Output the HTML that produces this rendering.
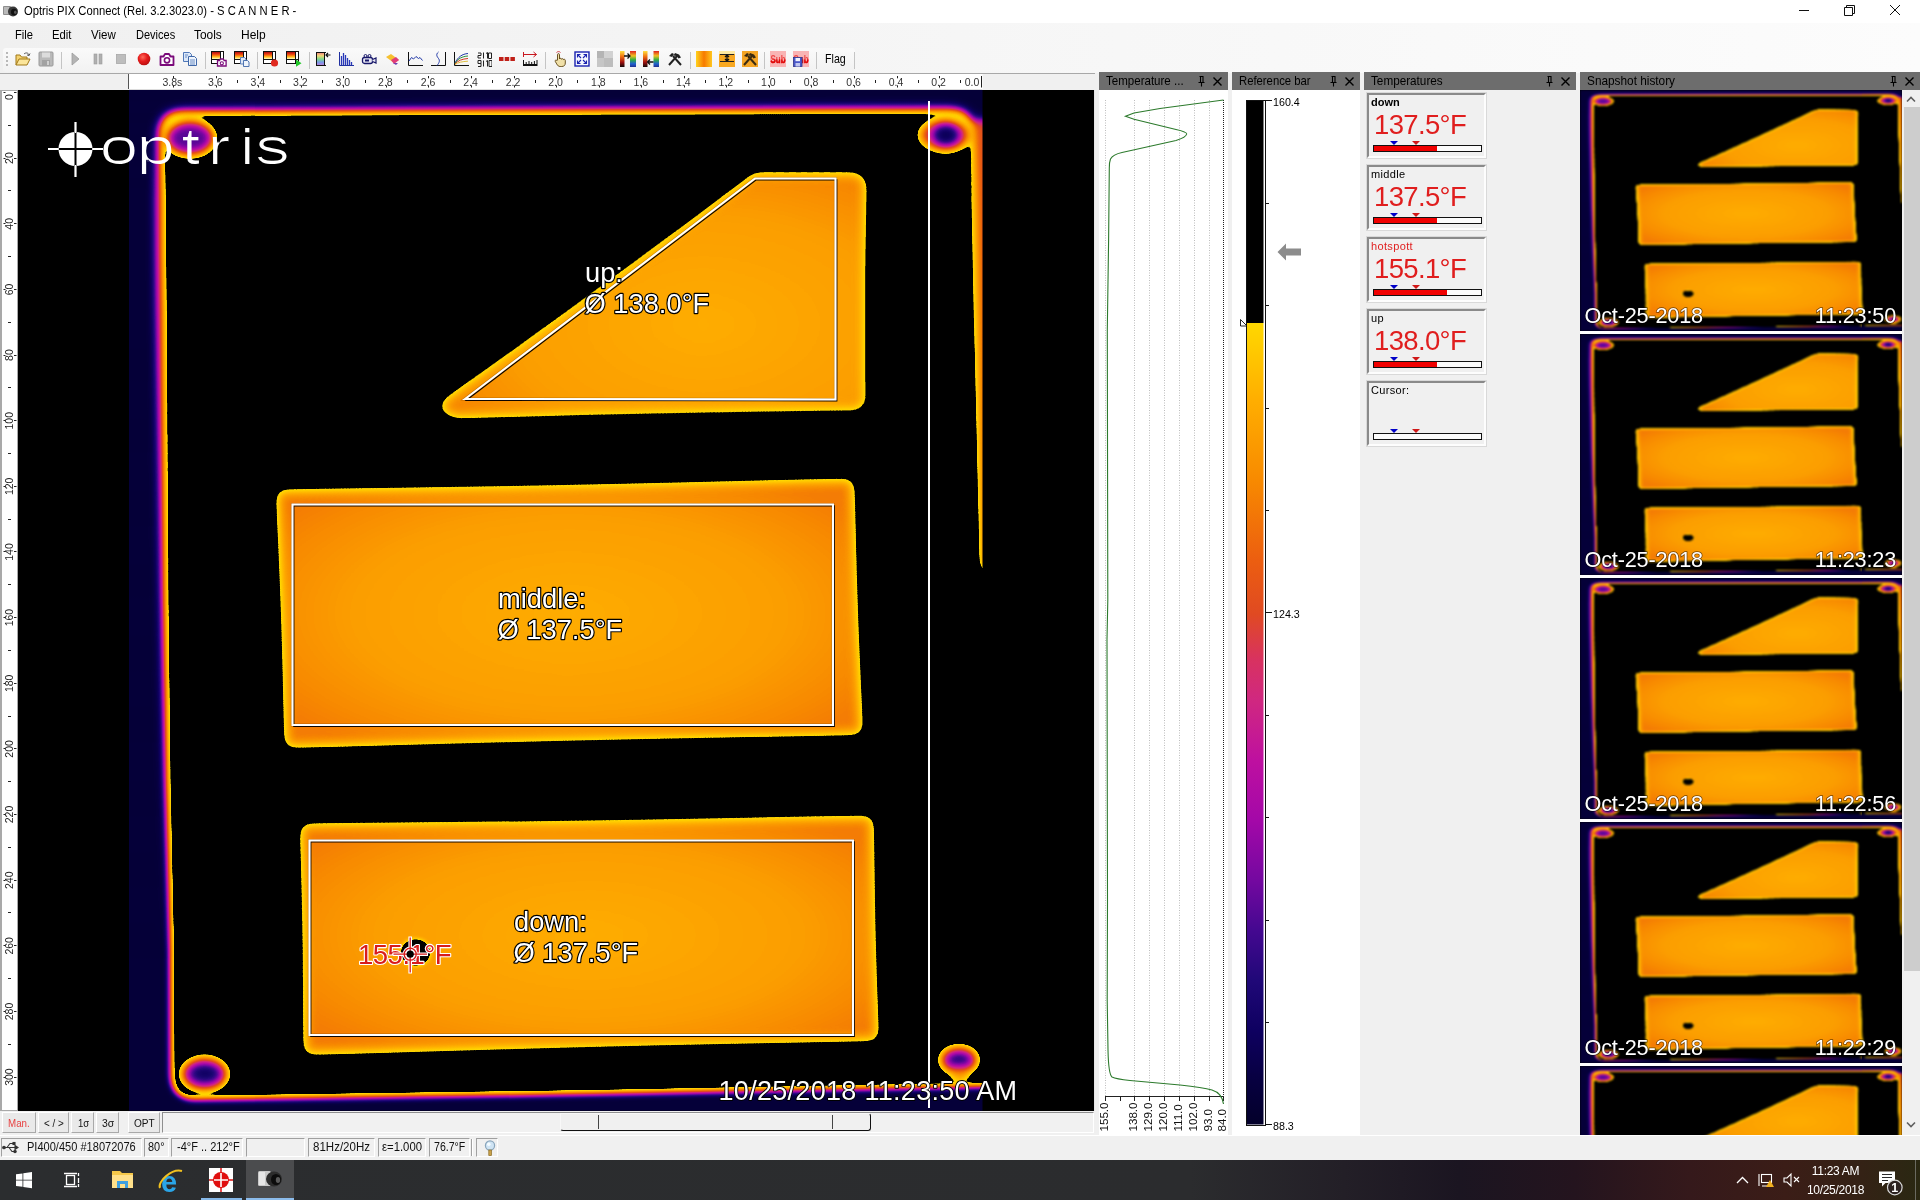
<!DOCTYPE html>
<html lang="en"><head><meta charset="utf-8"><title>Optris PIX Connect</title>
<style>
*{box-sizing:border-box}
html,body{margin:0;padding:0}
body{width:1920px;height:1200px;position:relative;overflow:hidden;background:#f0f0f0;font-family:"Liberation Sans",sans-serif;font-size:12px;color:#000}
.abs{position:absolute}
.t{position:absolute;white-space:nowrap;line-height:1}
#title{left:0;top:0;width:1920px;height:23px;background:#fff}
#menu{left:0;top:23px;width:1920px;height:24px;background:linear-gradient(90deg,#f0f0f0,#fcfcfc)}
#menu .t{top:6px;font-size:12.5px}
#tool{left:0;top:47px;width:1920px;height:26px;background:linear-gradient(90deg,#f0f0f0,#fcfcfc)}
#toolin{left:3px;top:1px;width:852px;height:24px;background:linear-gradient(#fafafa,#f2f2f2);border-radius:3px}
.sep{position:absolute;top:5px;width:1px;height:17px;background:#c4c4c4}
.ico{position:absolute;top:4px;width:16px;height:16px}
.phead{position:absolute;top:72px;height:18px;background:#6d6d6d;color:#000;font-size:12.5px}
.phead .t{left:7px;top:3px}
.pbody{position:absolute;top:90px;background:#fff}
.tbox{position:absolute;left:1367px;width:119px;height:65px;border:2px solid;border-color:#8a8a8a #fdfdfd #fdfdfd #8a8a8a;background:#f0f0f0;box-shadow:0 0 0 1px #d9d9d9}
.tbox .lab{position:absolute;left:2px;top:1px;font-size:11px;line-height:13px;white-space:nowrap}
.tbox .val{position:absolute;left:5px;top:16px;font-size:27.5px;line-height:28px;color:#e01e1e;white-space:nowrap;letter-spacing:-0.65px}
.tbox .bar{position:absolute;left:4px;top:50px;width:109px;height:7px;border:1px solid #111;background:#fbfbfb}
.tbox .bar i{position:absolute;left:0;top:0;height:5px;background:#f00000}
.tri{position:absolute;top:46px;width:0;height:0;border-left:4px solid transparent;border-right:4px solid transparent;border-top:4px solid #0000c8}
.sb{position:absolute;top:1138px;height:19px;border:1px solid;border-color:#a0a0a0 #fff #fff #a0a0a0;font-size:12px;line-height:17px;padding-left:3px;white-space:nowrap;overflow:hidden}
.tab{position:absolute;top:1112px;height:21px;border:1px solid;border-color:#fff #a9a9a9 #a9a9a9 #fff;background:#e9e9e9;font-size:11.5px;line-height:19px;text-align:center;white-space:nowrap}
</style></head>
<body>
<div id="w" style="position:absolute;left:0;top:0;width:1920px;height:1200px;will-change:transform">
<div id="title" class="abs"><svg class="abs" style="left:3px;top:4px" width="16" height="15" viewBox="0 0 16 15"><rect x="0" y="2" width="8" height="9" rx="1" fill="#8e8e8e"/><rect x="1" y="3" width="5" height="7" fill="#b9b9b9"/><ellipse cx="10" cy="7.5" rx="5" ry="5" fill="#3a3a3a"/><ellipse cx="11" cy="8" rx="3" ry="3.2" fill="#111"/><ellipse cx="12.3" cy="8.3" rx="1.3" ry="1.8" fill="#555"/></svg><div class="t" style="left:24.0px;top:5.2px;font-size:12.6px;color:#000;transform:scaleX(0.8925);transform-origin:0 0;">Optris PIX Connect (Rel. 3.2.3023.0) - S C A N N E R -</div><svg class="abs" style="left:1790px;top:0" width="130" height="23" viewBox="1790 0 130 23" fill="none" stroke="#111" stroke-width="1"><path d="M1799 10.5h10"/><path d="M1844.5 7.5h8v8h-8z"/><path d="M1846.5 7.5v-2h8v8h-2"/><path d="M1890 5l10 10M1900 5l-10 10"/></svg></div>
<div id="menu" class="abs"><div class="t" style="left:15.2px;top:5.5px;font-size:12.8px;color:#000;transform:scaleX(0.8727);transform-origin:0 0;">File</div><div class="t" style="left:52.4px;top:5.5px;font-size:12.8px;color:#000;transform:scaleX(0.8841);transform-origin:0 0;">Edit</div><div class="t" style="left:91.2px;top:5.5px;font-size:12.8px;color:#000;transform:scaleX(0.9014);transform-origin:0 0;">View</div><div class="t" style="left:135.8px;top:5.5px;font-size:12.8px;color:#000;transform:scaleX(0.8610);transform-origin:0 0;">Devices</div><div class="t" style="left:194.1px;top:5.5px;font-size:12.8px;color:#000;transform:scaleX(0.9303);transform-origin:0 0;">Tools</div><div class="t" style="left:241.3px;top:5.5px;font-size:12.8px;color:#000;transform:scaleX(0.9382);transform-origin:0 0;">Help</div></div>
<div id="tool" class="abs"><div id="toolin" class="abs"></div><svg width="0" height="0" style="position:absolute"><defs><linearGradient id="gp" x1="0" y1="0" x2="0" y2="1"><stop offset="0" stop-color="#b01010"/><stop offset=".3" stop-color="#e83a10"/><stop offset=".6" stop-color="#ff9a10"/><stop offset=".85" stop-color="#ffe45a"/><stop offset="1" stop-color="#fffbe0"/></linearGradient><linearGradient id="gr" x1="0" y1="0" x2="1" y2="0"><stop offset="0" stop-color="#e02020"/><stop offset=".3" stop-color="#f0d020"/><stop offset=".55" stop-color="#30c040"/><stop offset=".8" stop-color="#3060e0"/><stop offset="1" stop-color="#a030c0"/></linearGradient></defs></svg><svg class="abs" style="left:5px;top:4px" width="4" height="18" viewBox="0 0 4 18"><rect x="1" y="1" width="2" height="2" fill="#b8b8b8"/><rect x="1" y="5" width="2" height="2" fill="#b8b8b8"/><rect x="1" y="9" width="2" height="2" fill="#b8b8b8"/><rect x="1" y="13" width="2" height="2" fill="#b8b8b8"/></svg><svg class="ico" style="left:15px" viewBox="0 0 16 16"><path d="M1 14V4h4l1.5 2H12v2" fill="#f4d270" stroke="#a07818" stroke-width="1"/><path d="M1 14l3-6h11l-3 6z" fill="#fbe59a" stroke="#a07818" stroke-width="1"/><path d="M9 3c2-2 5-1 5 1.5M14 4.5l1-2M14 4.5l-2-.6" fill="none" stroke="#555" stroke-width="1"/></svg><svg class="ico" style="left:38px" viewBox="0 0 16 16"><rect x="1" y="1" width="14" height="14" rx="1" fill="#b9b9b9" stroke="#9a9a9a"/><rect x="4" y="1.5" width="8" height="5" fill="#dcdcdc"/><rect x="4" y="9" width="8" height="6" fill="#a2a2a2"/><rect x="9" y="10" width="2" height="4" fill="#d0d0d0"/></svg><svg class="ico" style="left:67px" viewBox="0 0 16 16"><path d="M5 2l7 6-7 6z" fill="#b4b4b4" stroke="#9c9c9c" stroke-width=".8"/></svg><svg class="ico" style="left:90px" viewBox="0 0 16 16"><rect x="4" y="3" width="3" height="10" fill="#b0b0b0" stroke="#9a9a9a" stroke-width=".6"/><rect x="9" y="3" width="3" height="10" fill="#b0b0b0" stroke="#9a9a9a" stroke-width=".6"/></svg><svg class="ico" style="left:113px" viewBox="0 0 16 16"><rect x="3.5" y="3.5" width="9" height="9" fill="#bdbdbd" stroke="#a8a8a8" stroke-width=".8"/></svg><svg class="ico" style="left:136px" viewBox="0 0 16 16"><radialGradient id="grec" cx=".4" cy=".35" r=".7"><stop offset="0" stop-color="#ff6a5a"/><stop offset=".5" stop-color="#e51c1c"/><stop offset="1" stop-color="#b40e0e"/></radialGradient><circle cx="8" cy="8" r="6.3" fill="url(#grec)"/></svg><svg class="ico" style="left:159px" viewBox="0 0 16 16"><path d="M1.5 5.5h3l1.5-2.5h4l1.5 2.5h3v8.500h-13z" fill="#fff" stroke="#7a0a7a" stroke-width="1.8" stroke-linejoin="round"/><circle cx="8" cy="9.3" r="2.6" fill="#fff" stroke="#7a0a7a" stroke-width="1.6"/></svg><svg class="ico" style="left:182px" viewBox="0 0 16 16"><path d="M1.500 1.500h6l2 2v7h-8z" fill="#dce8f8" stroke="#5078b8"/><path d="M6.500 5.500h6l2 2v7h-8z" fill="#eef4fc" stroke="#4068a8"/><path d="M8 9h5M8 11h5M8 13h5M3 4h3M3 6h2" stroke="#5a82c0" stroke-width=".9"/></svg><svg class="ico" style="left:211px" viewBox="0 0 16 16"><rect x="0.5" y="0.5" width="12" height="12" fill="#fff" stroke="#111"/><rect x="1" y="1" width="8" height="7" fill="url(#gp)"/><path d="M1 8.5h11M9.5 1v11" stroke="#111" stroke-width="1" fill="none"/><path d="M6.500 9.500h2l.8-1.500h3l.8 1.500h2v5.500h-8.600z" fill="#fff" stroke="#7a0a7a" stroke-width="1.300"/><circle cx="10.800" cy="12.300" r="1.600" fill="#fff" stroke="#7a0a7a" stroke-width="1.100"/></svg><svg class="ico" style="left:234px" viewBox="0 0 16 16"><rect x="0.5" y="0.5" width="12" height="12" fill="#fff" stroke="#111"/><rect x="1" y="1" width="8" height="7" fill="url(#gp)"/><path d="M1 8.5h11M9.5 1v11" stroke="#111" stroke-width="1" fill="none"/><path d="M6.500 6.500h4l1.500 1.500v5h-5.500z" fill="#dce8f8" stroke="#5078b8" stroke-width=".9"/><path d="M9.500 9.500h4l1.500 1.500v4.500h-5.500z" fill="#eef4fc" stroke="#4068a8" stroke-width=".9"/></svg><svg class="ico" style="left:263px" viewBox="0 0 16 16"><rect x="0.5" y="0.5" width="12" height="12" fill="#fff" stroke="#111"/><rect x="1" y="1" width="8" height="7" fill="url(#gp)"/><path d="M1 8.5h11M9.5 1v11" stroke="#111" stroke-width="1" fill="none"/><circle cx="11.500" cy="12" r="3.600" fill="#e02a20"/></svg><svg class="ico" style="left:286px" viewBox="0 0 16 16"><rect x="0.5" y="0.5" width="12" height="12" fill="#fff" stroke="#111"/><rect x="1" y="1" width="8" height="7" fill="url(#gp)"/><path d="M1 8.5h11M9.5 1v11" stroke="#111" stroke-width="1" fill="none"/><path d="M10 8.500l5.500 3.700-5.500 3.600z" fill="#22c82a"/></svg><svg class="ico" style="left:315px" viewBox="0 0 16 16"><linearGradient id="grv" x1="0" y1="0" x2="0" y2="1"><stop offset="0" stop-color="#f08080"/><stop offset=".25" stop-color="#f0d878"/><stop offset=".5" stop-color="#80d888"/><stop offset=".75" stop-color="#7898e8"/><stop offset="1" stop-color="#c080d8"/></linearGradient><rect x="2" y="1.500" width="7" height="13" fill="url(#grv)"/><path d="M1 1.500h10M1 14.500h10M1.500 1.500v13M9.500 1.500v13" stroke="#111" fill="none"/><path d="M15.500 4h-4.500M13 2l-2 2 2 2" stroke="#111" stroke-width="1.200" fill="none"/></svg><svg class="ico" style="left:338px" viewBox="0 0 16 16"><path d="M1.500 1v13.500H16" stroke="#2030a0" fill="none"/><path d="M3.500 14V5M5.500 14V2M7.500 14V4M9.500 14V7M11.500 14V9M13.500 14V11" stroke="#2838b8" stroke-width="1.300"/></svg><svg class="ico" style="left:361px" viewBox="0 0 16 16"><rect x="1.500" y="6.500" width="10" height="6" rx="2" fill="#e8e8f4" stroke="#18186a" stroke-width="1.300"/><path d="M11.500 8.500l3.500-1.500v5l-3.500-1.500" fill="#e8e8f4" stroke="#18186a" stroke-width="1.200"/><circle cx="4.500" cy="5" r="1.500" fill="none" stroke="#18186a"/><circle cx="8.500" cy="5" r="1.500" fill="none" stroke="#18186a"/><rect x="4" y="8.500" width="4" height="2" fill="#18186a"/></svg><svg class="ico" style="left:384px" viewBox="0 0 16 16"><path d="M2 6l5-3 8 6-5 3z" fill="#f6c030"/><path d="M7 9l5-3 3 3-5 4z" fill="#e03c7a"/><path d="M9 12l3 2 2-2" fill="#7040b0"/></svg><svg class="ico" style="left:407px" viewBox="0 0 16 16"><path d="M1.500 1v13.500H16" stroke="#111" fill="none"/><path d="M2 10l2.500-3.500 2 1.500 2.500-2.500 2.500 2 1.500-1 2.500 3" stroke="#2038a8" fill="none"/></svg><svg class="ico" style="left:430px" viewBox="0 0 16 16"><path d="M1 14.500h14.500V1" stroke="#111" fill="none"/><path d="M8.500 1c-3 2.500-1.500 4.500 0 6.500s1 4-1.500 7" stroke="#2038a8" fill="none"/></svg><svg class="ico" style="left:453px" viewBox="0 0 16 16"><path d="M1.500 1v13.500H16" stroke="#111" fill="none"/><path d="M2 12c3-6 7-9 13-9.500" stroke="#2038a8" fill="none"/><path d="M2 12.500c3-5 7-7 13-7.500" stroke="#30903a" fill="none"/><path d="M2 13c3-3.500 7-5 13-5.500" stroke="#d03a20" fill="none"/><path d="M2 13.500c3-2 7-3 13-3.300" stroke="#e0c040" fill="none"/></svg><svg class="ico" style="left:476px" viewBox="0 0 16 16"><g fill="none" stroke="#222" stroke-width="1"><path d="M2 2h3v2.500h-3v2.500h3M7.500 1.500v6M10 2.500l1.500-1v6M14 2h-1.500v5.500h3v-5.500zM2 9.500h3v3h-3zM5 12.500v3h-3M7.500 9.500v6M10 10.500l1.500-1v6M13 9.500h3v6h-3z"/></g></svg><svg class="ico" style="left:499px" viewBox="0 0 16 16"><rect x="0" y="6" width="4.500" height="4" fill="#c02018"/><rect x="5.700" y="6" width="4.500" height="4" fill="#c02018"/><rect x="11.400" y="6" width="4.500" height="4" fill="#c02018"/></svg><svg class="ico" style="left:522px" viewBox="0 0 16 16"><path d="M1.500 1v5M1.500 3.500h13M11.500 1l3 2.500-3 2.500" stroke="#c81820" fill="none"/><path d="M1 14h14.500" stroke="#111" stroke-width="2"/><path d="M1.500 13V9M15 13V9M4.200 13v-2M7 13v-3M9.700 13v-2M12.400 13v-3" stroke="#111"/></svg><svg class="ico" style="left:551px" viewBox="0 0 16 16"><path d="M6.500 9V3.600c0-1.300 2-1.300 2 0V8c.4-1 2-.9 2 .2.500-.9 2-.6 2 .4.600-.6 1.800-.3 1.800.8v2.600c0 2.200-1.200 3.500-3.600 3.500h-1.500c-1.600 0-2.500-.8-3.500-2.600l-1.500-2.600c-.5-1 1-1.800 1.800-.6z" fill="#f0e0a8" stroke="#5a4210" stroke-width=".9" stroke-linejoin="round"/><path d="M5.500 1.500c1.200-1.200 3-1.200 4 0" stroke="#d02838" fill="none" stroke-width=".9"/></svg><svg class="ico" style="left:574px" viewBox="0 0 16 16"><rect x="1" y="1" width="14" height="14" fill="#f4f6ff" stroke="#1a22b0" stroke-width="1.400"/><path d="M3.500 6.500v-3h3M9.500 3.500h3v3M12.500 9.500v3h-3M6.500 12.500h-3v-3M4 4l3 3M12 4l-3 3M12 12l-3-3M4 12l3-3" stroke="#1a22b0" fill="none" stroke-width="1.100"/></svg><svg class="ico" style="left:597px" viewBox="0 0 16 16"><rect x="0" y="0" width="16" height="16" fill="#c6c6c6"/><rect x="0" y="0" width="7" height="7" fill="#b4b4b4"/><rect x="7" y="7" width="9" height="9" fill="#bdbdbd"/><rect x="7" y="0" width="9" height="7" fill="#d2d2d2"/></svg><svg class="ico" style="left:620px" viewBox="0 0 16 16"><linearGradient id="gth" x1="0" y1="0" x2="0" y2="1"><stop offset="0" stop-color="#ffe040"/><stop offset=".35" stop-color="#f07010"/><stop offset=".7" stop-color="#a01010"/><stop offset="1" stop-color="#100808"/></linearGradient><linearGradient id="grb" x1="0" y1="0" x2="0" y2="1"><stop offset="0" stop-color="#e02020"/><stop offset=".3" stop-color="#f0c020"/><stop offset=".55" stop-color="#30b040"/><stop offset=".8" stop-color="#2060d0"/><stop offset="1" stop-color="#203090"/></linearGradient><rect x="0" y="0" width="4.500" height="16" fill="url(#gth)"/><rect x="10" y="0" width="6" height="16" fill="url(#grb)"/><path d="M4 5h6M7.500 2.500l2.500 2.500-2.500 2.500" stroke="#111" stroke-width="1.300" fill="none"/></svg><svg class="ico" style="left:643px" viewBox="0 0 16 16"><rect x="0" y="0" width="4.500" height="16" fill="url(#gth)"/><rect x="10.500" y="0" width="5.500" height="16" fill="url(#grb)"/><path d="M10.500 11h-6M7 8.500l-2.500 2.500 2.500 2.500" stroke="#111" stroke-width="1.300" fill="none"/></svg><svg class="ico" style="left:667px" viewBox="0 0 16 16"><path d="M2 14l8-9M14 14l-8-9" stroke="#222" stroke-width="2"/><path d="M8 2l4 1.500 2 3-2.500 1-2-2.500-3-.5z" fill="#222"/><path d="M2 5l3-3 2 1-2 3z" fill="#222"/></svg><svg class="ico" style="left:696px" viewBox="0 0 16 16"><linearGradient id="go" x1="0" y1="0" x2="1" y2="0"><stop offset="0" stop-color="#ffd21e"/><stop offset=".5" stop-color="#f77a00"/><stop offset="1" stop-color="#ffc61e"/></linearGradient><rect x="0" y="0" width="16" height="16" fill="url(#go)"/></svg><svg class="ico" style="left:719px" viewBox="0 0 16 16"><rect x="0" y="0" width="16" height="16" fill="#f8a820"/><rect x="0" y="0" width="16" height="3" fill="#ffe9a0"/><path d="M1 3.500h14M1 10.500h14" stroke="#222"/><path d="M8 4v6M6 6l2-2 2 2M6 8l2 2 2-2" stroke="#111" stroke-width="1.300" fill="none"/></svg><svg class="ico" style="left:742px" viewBox="0 0 16 16"><rect x="0" y="0" width="16" height="16" fill="#f4a424"/><path d="M2 14l8-9M14 14l-8-9" stroke="#3a2a10" stroke-width="2"/><path d="M8 2l4 1.500 2 3-2.500 1-2-2.500-3-.5z" fill="#3a2a10"/><path d="M2 5l3-3 2 1-2 3z" fill="#3a2a10"/></svg><svg class="ico" style="left:770px" viewBox="0 0 16 16"><rect x="0" y="0" width="16" height="16" fill="#f9b4b4"/><clipPath id="sublow"><rect x="0" y="8.500" width="16" height="8"/></clipPath><text x="8" y="12" font-size="10.500" textLength="15" lengthAdjust="spacingAndGlyphs" font-weight="bold" text-anchor="middle" fill="#ee4848" font-family="Liberation Sans,sans-serif">Sub</text><rect x="0" y="8" width="16" height="4.500" fill="#e80c0c" opacity=".0"/><g clip-path="url(#sublow)"><text x="8" y="12" font-size="10.500" textLength="15" lengthAdjust="spacingAndGlyphs" font-weight="bold" text-anchor="middle" fill="#e00808" stroke="#e00808" stroke-width=".4" font-family="Liberation Sans,sans-serif">Sub</text></g></svg><svg class="ico" style="left:793px" viewBox="0 0 16 16"><rect x="0" y="0" width="16" height="16" fill="#f9b4b4"/><text x="8" y="12" font-size="10.500" textLength="15" lengthAdjust="spacingAndGlyphs" font-weight="bold" text-anchor="middle" fill="#ee4848" font-family="Liberation Sans,sans-serif">Sub</text><g clip-path="url(#sublow)"><text x="8" y="12" font-size="10.500" textLength="15" lengthAdjust="spacingAndGlyphs" font-weight="bold" text-anchor="middle" fill="#e00808" stroke="#e00808" stroke-width=".4" font-family="Liberation Sans,sans-serif">Sub</text></g><rect x="0.500" y="6.500" width="8.500" height="9" fill="#4a58c8" stroke="#2c3890" stroke-width=".8"/><rect x="2.500" y="7" width="4.500" height="3.200" fill="#f0f2ff"/><rect x="2.500" y="12" width="4.500" height="3.500" fill="#c0c6f0"/></svg><div class="sep" style="left:61px"></div><div class="sep" style="left:205px"></div><div class="sep" style="left:257px"></div><div class="sep" style="left:309px"></div><div class="sep" style="left:545px"></div><div class="sep" style="left:690px"></div><div class="sep" style="left:764px"></div><div class="sep" style="left:816px"></div><div class="sep" style="left:854px"></div><div class="t" style="left:824.7px;top:5.5px;font-size:12.8px;color:#000;transform:scaleX(0.8353);transform-origin:0 0;">Flag</div></div>
<div class="abs" style="left:0;top:73px;width:1095px;height:17px;background:#f0f0f0;border-top:1px solid #a8a8a8"></div><svg class="abs" style="left:0;top:73px" width="1096" height="17" viewBox="0 73 1096 17" font-family="Liberation Sans,sans-serif" font-size="10.5"><rect x="129" y="74" width="853.500" height="15" fill="#fff"/><path d="M128.500 74v15" stroke="#555"/><path d="M129 89.500h853" stroke="#dcdcdc"/><path d="M173.5 76v11.5M216.5 76v11.5M237.5 80v3M258.5 76v11.5M280.5 80v3M301.5 76v11.5M322.5 80v3M343.5 76v11.5M365.5 80v3M386.5 76v11.5M407.5 80v3M428.5 76v11.5M450.5 80v3M471.5 76v11.5M492.5 80v3M514.5 76v11.5M535.5 80v3M556.5 76v11.5M577.5 80v3M599.5 76v11.5M620.5 80v3M641.5 76v11.5M663.5 80v3M684.5 76v11.5M705.5 80v3M726.5 76v11.5M748.5 80v3M769.5 76v11.5M790.5 80v3M811.5 76v11.5M833.5 80v3M854.5 76v11.5M875.5 80v3M897.5 76v11.5M918.5 80v3M939.5 76v11.5M960.5 80v3M981.5 76v11.5" stroke="#222" stroke-width="1"/><rect x="167.2" y="78.3" width="12" height="7" fill="#fff"/><text x="172.4" y="85.5" text-anchor="middle" fill="#333">3.8s</text><rect x="209.8" y="78.3" width="12" height="7" fill="#fff"/><text x="215.2" y="85.5" text-anchor="middle" fill="#333">3.6</text><rect x="252.3" y="78.3" width="12" height="7" fill="#fff"/><text x="257.8" y="85.5" text-anchor="middle" fill="#333">3.4</text><rect x="294.8" y="78.3" width="12" height="7" fill="#fff"/><text x="300.3" y="85.5" text-anchor="middle" fill="#333">3.2</text><rect x="337.4" y="78.3" width="12" height="7" fill="#fff"/><text x="342.9" y="85.5" text-anchor="middle" fill="#333">3.0</text><rect x="379.9" y="78.3" width="12" height="7" fill="#fff"/><text x="385.4" y="85.5" text-anchor="middle" fill="#333">2.8</text><rect x="422.5" y="78.3" width="12" height="7" fill="#fff"/><text x="428.0" y="85.5" text-anchor="middle" fill="#333">2.6</text><rect x="465.0" y="78.3" width="12" height="7" fill="#fff"/><text x="470.5" y="85.5" text-anchor="middle" fill="#333">2.4</text><rect x="507.6" y="78.3" width="12" height="7" fill="#fff"/><text x="513.1" y="85.5" text-anchor="middle" fill="#333">2.2</text><rect x="550.1" y="78.3" width="12" height="7" fill="#fff"/><text x="555.6" y="85.5" text-anchor="middle" fill="#333">2.0</text><rect x="592.7" y="78.3" width="12" height="7" fill="#fff"/><text x="598.2" y="85.5" text-anchor="middle" fill="#333">1.8</text><rect x="635.2" y="78.3" width="12" height="7" fill="#fff"/><text x="640.8" y="85.5" text-anchor="middle" fill="#333">1.6</text><rect x="677.8" y="78.3" width="12" height="7" fill="#fff"/><text x="683.3" y="85.5" text-anchor="middle" fill="#333">1.4</text><rect x="720.3" y="78.3" width="12" height="7" fill="#fff"/><text x="725.8" y="85.5" text-anchor="middle" fill="#333">1.2</text><rect x="762.9" y="78.3" width="12" height="7" fill="#fff"/><text x="768.4" y="85.5" text-anchor="middle" fill="#333">1.0</text><rect x="805.5" y="78.3" width="12" height="7" fill="#fff"/><text x="811.0" y="85.5" text-anchor="middle" fill="#333">0.8</text><rect x="848.0" y="78.3" width="12" height="7" fill="#fff"/><text x="853.5" y="85.5" text-anchor="middle" fill="#333">0.6</text><rect x="890.5" y="78.3" width="12" height="7" fill="#fff"/><text x="896.0" y="85.5" text-anchor="middle" fill="#333">0.4</text><rect x="933.1" y="78.3" width="12" height="7" fill="#fff"/><text x="938.6" y="85.5" text-anchor="middle" fill="#333">0.2</text><text x="972" y="85.5" text-anchor="middle" fill="#333" stroke="#fff" stroke-width="2.6" paint-order="stroke">0.0</text></svg>
<div class="abs" style="left:0;top:90px;width:18px;height:1021px;background:#a9a9a9"></div><svg class="abs" style="left:0;top:90px" width="18" height="1021" viewBox="0 90 18 1021" font-family="Liberation Sans,sans-serif" font-size="10.5"><rect x="2" y="91" width="15" height="1019" fill="#fff"/><path d="M3.500 92.500h2M14 92.500h2.500" stroke="#222"/><text transform="translate(13.300 97.0) rotate(-90)" text-anchor="middle" fill="#222">0</text><text transform="translate(13.300 158.1) rotate(-90)" text-anchor="middle" fill="#222">20</text><text transform="translate(13.300 223.8) rotate(-90)" text-anchor="middle" fill="#222">40</text><text transform="translate(13.300 289.4) rotate(-90)" text-anchor="middle" fill="#222">60</text><text transform="translate(13.300 355.1) rotate(-90)" text-anchor="middle" fill="#222">80</text><text transform="translate(13.300 420.7) rotate(-90)" text-anchor="middle" fill="#222">100</text><text transform="translate(13.300 486.3) rotate(-90)" text-anchor="middle" fill="#222">120</text><text transform="translate(13.300 552.0) rotate(-90)" text-anchor="middle" fill="#222">140</text><text transform="translate(13.300 617.6) rotate(-90)" text-anchor="middle" fill="#222">160</text><text transform="translate(13.300 683.3) rotate(-90)" text-anchor="middle" fill="#222">180</text><text transform="translate(13.300 748.9) rotate(-90)" text-anchor="middle" fill="#222">200</text><text transform="translate(13.300 814.5) rotate(-90)" text-anchor="middle" fill="#222">220</text><text transform="translate(13.300 880.2) rotate(-90)" text-anchor="middle" fill="#222">240</text><text transform="translate(13.300 945.8) rotate(-90)" text-anchor="middle" fill="#222">260</text><text transform="translate(13.300 1011.5) rotate(-90)" text-anchor="middle" fill="#222">280</text><text transform="translate(13.300 1077.1) rotate(-90)" text-anchor="middle" fill="#222">300</text><path d="M8 125.5h3M3.5 158.5h2M14 158.5h2.5M8 190.5h3M3.5 223.5h2M14 223.5h2.5M8 256.5h3M3.5 289.5h2M14 289.5h2.5M8 322.5h3M3.5 355.5h2M14 355.5h2.5M8 387.5h3M3.5 420.5h2M14 420.5h2.5M8 453.5h3M3.5 486.5h2M14 486.5h2.5M8 519.5h3M3.5 551.5h2M14 551.5h2.5M8 584.5h3M3.5 617.5h2M14 617.5h2.5M8 650.5h3M3.5 683.5h2M14 683.5h2.5M8 716.5h3M3.5 748.5h2M14 748.5h2.5M8 781.5h3M3.5 814.5h2M14 814.5h2.5M8 847.5h3M3.5 880.5h2M14 880.5h2.5M8 912.5h3M3.5 945.5h2M14 945.5h2.5M8 978.5h3M3.5 1011.5h2M14 1011.5h2.5M8 1044.5h3M3.5 1077.5h2M14 1077.5h2.5" stroke="#222" stroke-width="1"/></svg>
<svg class="abs" style="left:18px;top:90px" width="1077" height="1021" viewBox="18 90 1077 1021" font-family="Liberation Sans,sans-serif"><defs><filter id="pal" filterUnits="userSpaceOnUse" x="100" y="60" width="920" height="1080" color-interpolation-filters="sRGB"><feComponentTransfer><feFuncR type="table" tableValues="0.012 0.017 0.022 0.027 0.035 0.043 0.051 0.064 0.084 0.104 0.124 0.163 0.204 0.244 0.291 0.344 0.397 0.451 0.496 0.541 0.586 0.631 0.661 0.685 0.710 0.735 0.755 0.771 0.788 0.804 0.819 0.830 0.842 0.852 0.862 0.872 0.883 0.895 0.908 0.920 0.930 0.939 0.947 0.956 0.964 0.972 0.977 0.982 0.987 0.992 0.997 1.000 1.000 1.000 1.000 1.000 1.000 0.000 0.000 0.000 0.000 0.000 0.000 0.000"/><feFuncG type="table" tableValues="0.000 0.000 0.000 0.000 0.000 0.000 0.000 0.004 0.013 0.022 0.031 0.031 0.031 0.031 0.031 0.031 0.031 0.031 0.031 0.031 0.031 0.031 0.037 0.044 0.052 0.060 0.075 0.098 0.120 0.142 0.161 0.175 0.189 0.211 0.241 0.270 0.297 0.318 0.339 0.360 0.386 0.417 0.448 0.479 0.510 0.540 0.566 0.591 0.616 0.641 0.667 0.694 0.725 0.755 0.786 0.816 0.847 0.000 0.000 0.000 0.000 0.000 0.000 0.000"/><feFuncB type="table" tableValues="0.165 0.193 0.221 0.249 0.284 0.320 0.357 0.388 0.415 0.442 0.468 0.496 0.523 0.550 0.573 0.590 0.608 0.626 0.634 0.642 0.649 0.657 0.653 0.646 0.638 0.631 0.610 0.581 0.551 0.522 0.488 0.443 0.398 0.337 0.261 0.185 0.127 0.108 0.090 0.071 0.056 0.045 0.034 0.023 0.011 0.000 0.000 0.000 0.000 0.000 0.000 0.000 0.000 0.000 0.000 0.000 0.000 0.000 0.000 0.000 0.000 0.000 0.000 0.000"/></feComponentTransfer><feGaussianBlur stdDeviation="0.65"/></filter><filter id="b2" filterUnits="userSpaceOnUse" x="60" y="20" width="1020" height="1160" color-interpolation-filters="sRGB"><feGaussianBlur stdDeviation="2"/></filter><filter id="b3" filterUnits="userSpaceOnUse" x="60" y="20" width="1020" height="1160" color-interpolation-filters="sRGB"><feGaussianBlur stdDeviation="3"/></filter><filter id="b4" filterUnits="userSpaceOnUse" x="60" y="20" width="1020" height="1160" color-interpolation-filters="sRGB"><feGaussianBlur stdDeviation="4"/></filter><filter id="b5" filterUnits="userSpaceOnUse" x="60" y="20" width="1020" height="1160" color-interpolation-filters="sRGB"><feGaussianBlur stdDeviation="5"/></filter><filter id="b55" filterUnits="userSpaceOnUse" x="60" y="20" width="1020" height="1160" color-interpolation-filters="sRGB"><feGaussianBlur stdDeviation="5.5"/></filter><filter id="b6" filterUnits="userSpaceOnUse" x="60" y="20" width="1020" height="1160" color-interpolation-filters="sRGB"><feGaussianBlur stdDeviation="6"/></filter><linearGradient id="mgr" gradientUnits="userSpaceOnUse" x1="0" y1="95" x2="0" y2="960"><stop offset="0" stop-color="#777"/><stop offset=".12" stop-color="#fff"/><stop offset=".25" stop-color="#fff"/><stop offset="1" stop-color="#000"/></linearGradient><mask id="mA" maskUnits="userSpaceOnUse" x="100" y="60" width="920" height="1080"><rect x="100" y="60" width="920" height="1080" fill="url(#mgr)"/></mask><clipPath id="scanclip"><rect x="129" y="90" width="853.500" height="1020.800"/></clipPath><radialGradient id="sg" cx=".5" cy=".5" r=".62"><stop offset="0" stop-color="#cccccc"/><stop offset=".6" stop-color="#c3c3c3"/><stop offset="1" stop-color="#afafaf"/></radialGradient><radialGradient id="sg2" cx=".62" cy=".62" r=".75"><stop offset="0" stop-color="#cccccc"/><stop offset=".6" stop-color="#c3c3c3"/><stop offset="1" stop-color="#afafaf"/></radialGradient></defs><rect x="18" y="90" width="1076" height="1021" fill="#000"/><rect x="1094" y="90" width="1" height="1021" fill="#e6e6e6"/><g id="scan" filter="url(#pal)" clip-path="url(#scanclip)"><g filter="url(#b3)"><rect x="90" y="50" width="960" height="1100" fill="#090909"/><rect x="972" y="120" width="34" height="449" fill="#919191"/><path d="M186 110.300 L620 109 L949 108.500 Q974 108.500 974.200 134 L982.800 566 L995 572 L999 1086.500 L750 1091.100 L620 1093.600 L196 1099.800 Q170.800 1100 170.500 1074 L170 950 L165.800 780 L162.900 600 L159.100 250 L158.600 136 Q158.600 110.300 184 110.300Z" fill="#fff"/></g><g mask="url(#mA)"><g filter="url(#b6)"><rect x="90" y="50" width="960" height="1100" fill="#090909"/><rect x="972" y="120" width="34" height="449" fill="#919191"/><path d="M186 110.300 L620 109 L949 108.500 Q974 108.500 974.200 134 L982.800 566 L995 572 L999 1086.500 L750 1091.100 L620 1093.600 L196 1099.800 Q170.800 1100 170.500 1074 L170 950 L165.800 780 L162.900 600 L159.100 250 L158.600 136 Q158.600 110.300 184 110.300Z" fill="#fff"/></g></g><g filter="url(#b5)"><ellipse cx="190" cy="138" rx="23" ry="16" fill="#3d3d3d"/><ellipse cx="945" cy="135" rx="25" ry="15" fill="#8d8d8d"/><ellipse cx="946" cy="135" rx="14" ry="11.500" fill="#171717"/><ellipse cx="204.500" cy="1074" rx="21.500" ry="15" fill="#444444"/><ellipse cx="205" cy="1073.500" rx="13" ry="7" fill="#171717"/><ellipse cx="959" cy="1060" rx="17" ry="11.500" fill="#444444"/><ellipse cx="959" cy="1060" rx="9" ry="6" fill="#242424"/><rect x="952" y="1068" width="16" height="14" fill="#c1c1c1"/></g><g filter="url(#b55)"><path d="M445 401 L755 174 L857 174.500 L864.500 181 L864.500 403.500 L858 409.300 L455 416.300 L441 408.700Z" fill="url(#sg2)"/><path d="M278.500 492 L851.800 481 L860.500 732.500 L287 745.500Z" fill="url(#sg)"/><path d="M302.500 826 L871.200 818 L876.400 1038.500 L306 1052.500Z" fill="url(#sg)"/></g><ellipse cx="415.500" cy="952.500" rx="15" ry="13.500" fill="#fff" filter="url(#b2)"/></g><path d="M465 399 L755 178.500 L835.500 178.500 L835.500 399.500Z" fill="none" stroke="#000" stroke-width="3.200" opacity=".22"/><path d="M465 399 L755 178.500 L835.500 178.500 L835.500 399.500Z" fill="none" stroke="#0c0400" stroke-width="1.200" transform="translate(1.300 1.300)"/><path d="M465 399 L755 178.500 L835.500 178.500 L835.500 399.500Z" fill="none" stroke="#fff" stroke-width="2.100"/><path d="M292.500 504.500H833V725H292.500Z" fill="none" stroke="#000" stroke-width="3.200" opacity=".22"/><path d="M292.500 504.500H833V725H292.500Z" fill="none" stroke="#0c0400" stroke-width="1.200" transform="translate(1.300 1.300)"/><path d="M292.500 504.500H833V725H292.500Z" fill="none" stroke="#fff" stroke-width="2.100"/><path d="M309.500 840.500H853V1035H309.500Z" fill="none" stroke="#000" stroke-width="3.200" opacity=".22"/><path d="M309.500 840.500H853V1035H309.500Z" fill="none" stroke="#0c0400" stroke-width="1.200" transform="translate(1.300 1.300)"/><path d="M309.500 840.500H853V1035H309.500Z" fill="none" stroke="#fff" stroke-width="2.100"/><rect x="928" y="101" width="2" height="1007" fill="#fff"/><text x="585" y="282" font-size="27.3" fill="#fff" stroke="#000" stroke-width="2.4" paint-order="stroke" stroke-linejoin="round" >up:</text><text x="584.5" y="313" font-size="27.3" fill="#fff" stroke="#000" stroke-width="2.4" paint-order="stroke" stroke-linejoin="round" >Ø 138.0°F</text><text x="498" y="608" font-size="27.3" fill="#fff" stroke="#000" stroke-width="2.4" paint-order="stroke" stroke-linejoin="round" >middle:</text><text x="497.5" y="639" font-size="27.3" fill="#fff" stroke="#000" stroke-width="2.4" paint-order="stroke" stroke-linejoin="round" >Ø 137.5°F</text><text x="514" y="931" font-size="27.3" fill="#fff" stroke="#000" stroke-width="2.4" paint-order="stroke" stroke-linejoin="round" >down:</text><text x="513.5" y="962" font-size="27.3" fill="#fff" stroke="#000" stroke-width="2.4" paint-order="stroke" stroke-linejoin="round" >Ø 137.5°F</text><text x="358" y="964" font-size="27.5" fill="#d81c1c" stroke="#fff" stroke-width="2.2" paint-order="stroke" stroke-linejoin="round" letter-spacing="-0.5">155.1°F</text><g stroke="#fff" stroke-width="3.600" fill="none"><path d="M410.200 936.500v37M392.500 954.200h35.500"/></g><circle cx="410.200" cy="954.200" r="7.600" fill="#fff"/><g stroke="#d81c1c" stroke-width="1.300" fill="none"><path d="M410.200 937.500v35M393.500 954.200h33.500"/><circle cx="410.200" cy="954.200" r="6"/></g><circle cx="410.200" cy="954.200" r="3.600" fill="#000"/><text x="718.5" y="1099.5" font-size="27.0" fill="#fff" stroke="#000" stroke-width="1.8" paint-order="stroke" stroke-linejoin="round" letter-spacing="0.3">10/25/2018 11:23:50 AM</text><g fill="#fff"><circle cx="75.500" cy="149" r="17"/><rect x="74.500" y="122" width="2" height="55"/><rect x="48" y="148" width="55" height="2"/></g><g stroke="#000" stroke-width="2"><path d="M75.500 132v34M58.500 149h34"/></g><g fill="#fff"><rect x="74.800" y="122" width="1.400" height="11"/><rect x="74.800" y="165" width="1.400" height="12"/><rect x="48" y="148.300" width="11" height="1.400"/><rect x="92" y="148.300" width="11" height="1.400"/></g><filter id="thin" x="-5%" y="-20%" width="110%" height="140%"><feMorphology operator="erode" radius="0.85 0.3"/></filter><text transform="translate(0 163.500) scale(1.4 1)" x="71.1 97.4 129.3 148.1 171.0 182.1" y="0" font-size="50" fill="#fff" filter="url(#thin)">optris</text></svg>
<div class="phead" style="left:1099px;width:129px"><div class="t" style="left:7.0px;top:3.3px;font-size:12.8px;color:#000;transform:scaleX(0.9015);transform-origin:0 0;">Temperature ...</div><svg class="abs" style="left:97px;top:3px" width="11" height="12" viewBox="0 0 11 12"><path d="M3.500 1.500h4M4.500 1.500v6M7 1.500v6M2.500 7.500h6M5.500 7.500v4" stroke="#000" fill="none" stroke-width="1.100"/></svg><svg class="abs" style="left:113px;top:4px" width="11" height="11" viewBox="0 0 11 11"><path d="M1.500 1.500l8 8M9.500 1.500l-8 8" stroke="#000" fill="none" stroke-width="1.400"/></svg></div><div class="pbody" style="left:1099px;width:129px;height:1045px"></div><svg class="abs" style="left:1099px;top:90px" width="129" height="1045" viewBox="1099 90 129 1045" font-family="Liberation Sans,sans-serif" font-size="11"><path d="M1105.5 100v996" stroke="#bdbdbd" stroke-dasharray="1 1.500"/><path d="M1134.5 100v996" stroke="#bdbdbd" stroke-dasharray="1 1.500"/><path d="M1149.5 100v996" stroke="#bdbdbd" stroke-dasharray="1 1.500"/><path d="M1164.5 100v996" stroke="#bdbdbd" stroke-dasharray="1 1.500"/><path d="M1179.5 100v996" stroke="#bdbdbd" stroke-dasharray="1 1.500"/><path d="M1194.5 100v996" stroke="#bdbdbd" stroke-dasharray="1 1.500"/><path d="M1209.5 100v996" stroke="#bdbdbd" stroke-dasharray="1 1.500"/><path d="M1223.500 100v996" stroke="#222" stroke-dasharray="1 1"/><path d="M1105 1096.500h119" stroke="#222"/><path d="M1105.5 1097v4M1134.5 1097v4M1149.5 1097v4M1164.5 1097v4M1179.5 1097v4M1194.5 1097v4M1209.5 1097v4M1223.5 1097v4M1120.5 1097v4" stroke="#222"/><text transform="translate(1108.3 1131.5) rotate(-90)" fill="#111" font-size="11.6">155.0</text><text transform="translate(1137.3 1131.5) rotate(-90)" fill="#111" font-size="11.6">138.0</text><text transform="translate(1152.3 1131.5) rotate(-90)" fill="#111" font-size="11.6">129.0</text><text transform="translate(1167.3 1131.5) rotate(-90)" fill="#111" font-size="11.6">120.0</text><text transform="translate(1182.3 1131.5) rotate(-90)" fill="#111" font-size="11.6">111.0</text><text transform="translate(1197.3 1131.5) rotate(-90)" fill="#111" font-size="11.6">102.0</text><text transform="translate(1212.3 1131.5) rotate(-90)" fill="#111" font-size="11.6">93.0</text><text transform="translate(1226.3 1131.5) rotate(-90)" fill="#111" font-size="11.6">84.0</text><path d="M1223.500 100 L1160 108.500 L1134 113 L1125.500 116.200 L1134 119.200 L1176 129.500 Q1187 132 1186.700 134 Q1186 137.500 1176 140.500 L1122 152.500 Q1113 154.500 1110.500 159 Q1109.300 162 1109.300 168 L1108.600 240 L1107.300 330 L1107.800 600 L1107 640 L1107.500 900 L1107.200 1000 L1108 1050 Q1108.500 1074 1112 1077 Q1116 1079 1130 1080.500 L1180 1085 Q1203 1087.500 1212 1090 Q1222 1093 1223.500 1104" fill="none" stroke="#2c7a2c" stroke-width="1.100"/></svg>
<div class="phead" style="left:1232px;width:128px"><div class="t" style="left:7.0px;top:3.3px;font-size:12.8px;color:#000;transform:scaleX(0.8827);transform-origin:0 0;">Reference bar</div><svg class="abs" style="left:96px;top:3px" width="11" height="12" viewBox="0 0 11 12"><path d="M3.500 1.500h4M4.500 1.500v6M7 1.500v6M2.500 7.500h6M5.500 7.500v4" stroke="#000" fill="none" stroke-width="1.100"/></svg><svg class="abs" style="left:112px;top:4px" width="11" height="11" viewBox="0 0 11 11"><path d="M1.500 1.500l8 8M9.500 1.500l-8 8" stroke="#000" fill="none" stroke-width="1.400"/></svg></div><div class="pbody" style="left:1232px;width:128px;height:1045px"></div><svg class="abs" style="left:1232px;top:90px" width="128" height="1045" viewBox="1232 90 128 1045" font-family="Liberation Sans,sans-serif" font-size="10.700"><defs><linearGradient id="rbg" x1="0" y1="0" x2="0" y2="1"><stop offset="0.000" stop-color="#ffd800"/><stop offset="0.096" stop-color="#ffae00"/><stop offset="0.196" stop-color="#f88a00"/><stop offset="0.296" stop-color="#ec5e10"/><stop offset="0.363" stop-color="#e04a22"/><stop offset="0.420" stop-color="#d83260"/><stop offset="0.470" stop-color="#d02880"/><stop offset="0.546" stop-color="#be10a0"/><stop offset="0.620" stop-color="#a408a8"/><stop offset="0.695" stop-color="#7408a0"/><stop offset="0.758" stop-color="#440890"/><stop offset="0.820" stop-color="#200878"/><stop offset="0.883" stop-color="#0e0060"/><stop offset="0.945" stop-color="#070040"/><stop offset="1.000" stop-color="#03002a"/></linearGradient></defs><rect x="1246.500" y="100.500" width="19" height="1025" fill="#fff" stroke="#111"/><rect x="1247" y="101" width="16.500" height="222" fill="#000"/><rect x="1247" y="323" width="16.500" height="801.500" fill="url(#rbg)"/><path d="M1266 100.5h6M1266 203.5h3M1266 305.5h3M1266 408.5h3M1266 510.5h3M1266 612.5h6M1266 715.5h3M1266 817.5h3M1266 920.5h3M1266 1022.5h3M1266 1124.5h6" stroke="#111"/><text x="1273" y="105.500">160.4</text><text x="1273" y="618">124.3</text><text x="1273" y="1130">88.3</text><path d="M1240.500 319.500v6.500h6.500z" fill="#fff" stroke="#111" stroke-width=".9"/><path d="M1277.500 252l8.500-8.500v5h15v7h-15v5z" fill="#8c8c8c"/></svg>
<div class="phead" style="left:1364px;width:212px"><div class="t" style="left:7.0px;top:3.3px;font-size:12.8px;color:#000;transform:scaleX(0.9162);transform-origin:0 0;">Temperatures</div><svg class="abs" style="left:180px;top:3px" width="11" height="12" viewBox="0 0 11 12"><path d="M3.500 1.500h4M4.500 1.500v6M7 1.500v6M2.500 7.500h6M5.500 7.500v4" stroke="#000" fill="none" stroke-width="1.100"/></svg><svg class="abs" style="left:196px;top:4px" width="11" height="11" viewBox="0 0 11 11"><path d="M1.500 1.500l8 8M9.500 1.500l-8 8" stroke="#000" fill="none" stroke-width="1.400"/></svg></div><div class="pbody" style="left:1364px;width:212px;height:1045px;background:#f0f0f0"></div><div class="tbox" style="top:93px"><div class="lab" style="color:#000;font-weight:bold;">down</div><div class="val">137.5°F</div><div class="bar"><i style="width:63px"></i></div><div class="tri" style="left:21px"></div><div class="tri" style="left:43px;border-top-color:#d01818"></div></div><div class="tbox" style="top:165px"><div class="lab" style="color:#000;letter-spacing:0.35px;">middle</div><div class="val">137.5°F</div><div class="bar"><i style="width:63px"></i></div><div class="tri" style="left:21px"></div><div class="tri" style="left:43px;border-top-color:#d01818"></div></div><div class="tbox" style="top:237px"><div class="lab" style="color:#e01e1e;letter-spacing:0.35px;">hotspott</div><div class="val">155.1°F</div><div class="bar"><i style="width:73px"></i></div><div class="tri" style="left:21px"></div><div class="tri" style="left:43px;border-top-color:#d01818"></div></div><div class="tbox" style="top:309px"><div class="lab" style="color:#000;letter-spacing:0.35px;">up</div><div class="val">138.0°F</div><div class="bar"><i style="width:63px"></i></div><div class="tri" style="left:21px"></div><div class="tri" style="left:43px;border-top-color:#d01818"></div></div><div class="tbox" style="top:381px"><div class="lab" style="color:#000;letter-spacing:0.35px;">Cursor:</div><div class="bar"></div><div class="tri" style="left:21px"></div><div class="tri" style="left:43px;border-top-color:#d01818"></div></div>
<div class="phead" style="left:1580px;width:340px"><div class="t" style="left:7.0px;top:3.3px;font-size:12.8px;color:#000;transform:scaleX(0.9230);transform-origin:0 0;">Snapshot history</div><svg class="abs" style="left:308px;top:3px" width="11" height="12" viewBox="0 0 11 12"><path d="M3.500 1.500h4M4.500 1.500v6M7 1.500v6M2.500 7.500h6M5.500 7.500v4" stroke="#000" fill="none" stroke-width="1.100"/></svg><svg class="abs" style="left:324px;top:4px" width="11" height="11" viewBox="0 0 11 11"><path d="M1.500 1.500l8 8M9.500 1.500l-8 8" stroke="#000" fill="none" stroke-width="1.400"/></svg></div><div class="pbody" style="left:1580px;width:340px;height:1045px"></div><svg class="abs" style="left:1580px;top:90px" width="322" height="1045" viewBox="1580 90 322 1045" font-family="Liberation Sans,sans-serif" font-size="21.7"><defs><filter id="tb" filterUnits="userSpaceOnUse" x="1570" y="80" width="342" height="1070" color-interpolation-filters="sRGB"><feGaussianBlur stdDeviation="0.8"/></filter><clipPath id="tc0"><rect x="1580" y="90" width="322" height="241"/></clipPath><clipPath id="tc1"><rect x="1580" y="334" width="322" height="241"/></clipPath><clipPath id="tc2"><rect x="1580" y="578" width="322" height="241"/></clipPath><clipPath id="tc3"><rect x="1580" y="822" width="322" height="241"/></clipPath><clipPath id="tc4"><rect x="1580" y="1066" width="322" height="241"/></clipPath></defs><rect x="1580" y="90" width="322" height="241" fill="#000"/><g filter="url(#tb)" clip-path="url(#tc0)"><use href="#scan" transform="translate(1531.332 68.735) scale(0.37727 0.23627)"/></g><text x="1584.5" y="323" text-anchor="start" fill="#fff" stroke="#000" stroke-opacity=".55" stroke-width="1.500" paint-order="stroke" letter-spacing="-0.2">Oct-25-2018</text><text x="1896" y="323" text-anchor="end" fill="#fff" stroke="#000" stroke-opacity=".55" stroke-width="1.500" paint-order="stroke" letter-spacing="-0.2">11:23:50</text><rect x="1580" y="334" width="322" height="241" fill="#000"/><g filter="url(#tb)" clip-path="url(#tc1)"><use href="#scan" transform="translate(1531.332 312.735) scale(0.37727 0.23627)"/></g><text x="1584.5" y="567" text-anchor="start" fill="#fff" stroke="#000" stroke-opacity=".55" stroke-width="1.500" paint-order="stroke" letter-spacing="-0.2">Oct-25-2018</text><text x="1896" y="567" text-anchor="end" fill="#fff" stroke="#000" stroke-opacity=".55" stroke-width="1.500" paint-order="stroke" letter-spacing="-0.2">11:23:23</text><rect x="1580" y="578" width="322" height="241" fill="#000"/><g filter="url(#tb)" clip-path="url(#tc2)"><use href="#scan" transform="translate(1531.332 556.735) scale(0.37727 0.23627)"/></g><text x="1584.5" y="811" text-anchor="start" fill="#fff" stroke="#000" stroke-opacity=".55" stroke-width="1.500" paint-order="stroke" letter-spacing="-0.2">Oct-25-2018</text><text x="1896" y="811" text-anchor="end" fill="#fff" stroke="#000" stroke-opacity=".55" stroke-width="1.500" paint-order="stroke" letter-spacing="-0.2">11:22:56</text><rect x="1580" y="822" width="322" height="241" fill="#000"/><g filter="url(#tb)" clip-path="url(#tc3)"><use href="#scan" transform="translate(1531.332 800.735) scale(0.37727 0.23627)"/></g><text x="1584.5" y="1055" text-anchor="start" fill="#fff" stroke="#000" stroke-opacity=".55" stroke-width="1.500" paint-order="stroke" letter-spacing="-0.2">Oct-25-2018</text><text x="1896" y="1055" text-anchor="end" fill="#fff" stroke="#000" stroke-opacity=".55" stroke-width="1.500" paint-order="stroke" letter-spacing="-0.2">11:22:29</text><rect x="1580" y="1066" width="322" height="241" fill="#000"/><g filter="url(#tb)" clip-path="url(#tc4)"><use href="#scan" transform="translate(1531.332 1044.735) scale(0.37727 0.23627)"/></g></svg><div class="abs" style="left:1902px;top:90px;width:18px;height:1045px;background:#f0f0f0"></div><div class="abs" style="left:1904px;top:107px;width:16px;height:864px;background:#cdcdcd"></div><svg class="abs" style="left:1902px;top:90px" width="18" height="1045" viewBox="0 0 18 1045" fill="none" stroke="#606060" stroke-width="1.600"><path d="M5 11.500l4-4 4 4M5 1032.500l4 4 4-4"/></svg>
<div class="abs" style="left:0;top:1111px;width:1095px;height:24px;background:#f0f0f0"></div><div class="tab" style="left:2px;width:34px"></div><div class="t" style="left:8.3px;top:1118.0px;font-size:11.8px;color:#e84040;transform:scaleX(0.8272);transform-origin:0 0;">Man.</div><div class="tab" style="left:38px;width:31px"></div><div class="t" style="left:44.2px;top:1118.0px;font-size:11.8px;color:#111;transform:scaleX(0.8384);transform-origin:0 0;">&lt; / &gt;</div><div class="tab" style="left:71px;width:23px"></div><div class="t" style="left:78.0px;top:1118.0px;font-size:11.8px;color:#111;transform:scaleX(0.8089);transform-origin:0 0;">1σ</div><div class="tab" style="left:96px;width:23px"></div><div class="t" style="left:102.0px;top:1118.0px;font-size:11.8px;color:#111;transform:scaleX(0.8811);transform-origin:0 0;">3σ</div><div class="tab" style="left:128px;width:32px"></div><div class="t" style="left:134.2px;top:1118.0px;font-size:11.8px;color:#111;transform:scaleX(0.8575);transform-origin:0 0;">OPT</div><div class="abs" style="left:162px;top:1112px;width:932px;height:21px;border:1px solid;border-color:#8f8f8f #fff #fff #8f8f8f;background:#f1f1f1"></div><div class="abs" style="left:560px;top:1113px;width:311px;height:18px;border:1px solid;border-color:#f8f8f8 #111 #111 #f8f8f8;border-radius:0 3px 3px 3px;background:#f0f0f0"></div><div class="abs" style="left:598px;top:1115px;width:1px;height:14px;background:#444"></div><div class="abs" style="left:832px;top:1115px;width:1px;height:14px;background:#444"></div><div class="abs" style="left:0;top:1135px;width:1920px;height:1px;background:#fff"></div><div class="sb" style="left:1px;width:141px"></div><div class="t" style="left:27.2px;top:1141.0px;font-size:12.6px;color:#111;transform:scaleX(0.8773);transform-origin:0 0;">PI400/450 #18072076</div><div class="sb" style="left:144px;width:25px"></div><div class="t" style="left:148.0px;top:1141.0px;font-size:12.6px;color:#111;transform:scaleX(0.8659);transform-origin:0 0;">80°</div><div class="sb" style="left:171px;width:72px"></div><div class="t" style="left:176.7px;top:1141.0px;font-size:12.6px;color:#111;transform:scaleX(0.8759);transform-origin:0 0;">-4°F .. 212°F</div><div class="sb" style="left:246px;width:59px"></div><div class="sb" style="left:308px;width:67px"></div><div class="t" style="left:313.0px;top:1141.0px;font-size:12.6px;color:#111;transform:scaleX(0.9145);transform-origin:0 0;">81Hz/20Hz</div><div class="sb" style="left:378px;width:48px"></div><div class="t" style="left:382.0px;top:1141.0px;font-size:12.6px;color:#111;transform:scaleX(0.8987);transform-origin:0 0;">ε=1.000</div><div class="sb" style="left:429px;width:41px"></div><div class="t" style="left:433.7px;top:1141.0px;font-size:12.6px;color:#111;transform:scaleX(0.8401);transform-origin:0 0;">76.7°F</div><div class="sb" style="left:476px;width:22px"></div><div class="abs" style="left:471px;top:1139px;width:2px;height:17px;border-left:1px solid #a0a0a0;border-right:1px solid #fff"></div><svg class="abs" style="left:2px;top:1140px" width="17" height="15" viewBox="0 0 17 15" fill="none" stroke="#333" stroke-width="1.100"><path d="M1 7.500h14M5 7.500l3-4h3M7 7.500l3 4h2"/><circle cx="2" cy="7.500" r="1.300" fill="#333"/><rect x="11" y="2.500" width="2" height="2" fill="#333"/><circle cx="13" cy="11.500" r="1.200" fill="#333"/><path d="M13 5.500l3 2-3 2z" fill="#333"/></svg><svg class="abs" style="left:483px;top:1140px" width="14" height="16" viewBox="0 0 14 16"><circle cx="7" cy="5.500" r="4.600" fill="#cfe4f4" stroke="#8aa6bc" stroke-width="1.200"/><circle cx="5.800" cy="4.300" r="1.800" fill="#f4fbff"/><rect x="5.800" y="10" width="2.600" height="5.500" fill="#c9a24a" stroke="#8a6a20" stroke-width=".7"/></svg><div class="abs" style="left:0;top:1160px;width:1920px;height:40px;background:linear-gradient(90deg,#2b2d2f 0,#2b2c2e 62%,#231f27 70%,#1b1521 76%,#24141e 82%,#35191b 88%,#3b1d17 93%,#342215 97%,#2a2812 100%)"></div><div class="abs" style="left:246px;top:1160px;width:48px;height:40px;background:#4b4c4e"></div><div class="abs" style="left:201px;top:1198px;width:41px;height:2px;background:#86b8e8"></div><div class="abs" style="left:246px;top:1198px;width:48px;height:2px;background:#8cbcec"></div><svg class="abs" style="left:0;top:1160px" width="320" height="40" viewBox="0 1160 320 40"><g fill="#fff"><path d="M16 1174.300l6.500-.9v6.300H16zM23.300 1173.300l8.700-1.300v7.700h-8.700zM16 1180.500h6.500v6.300l-6.500-.9zM23.300 1180.500H32v7.700l-8.700-1.300z"/></g><g fill="none" stroke="#fff" stroke-width="1.300"><rect x="66.500" y="1175.500" width="8" height="9"/><path d="M64 1173.500h13M64 1186.500h13M78.500 1173v3M78.500 1178v5M78.500 1184v3"/></g><path d="M112 1171h8l2 2h11v15h-21z" fill="#f5c84a"/><rect x="112" y="1175" width="21" height="13" fill="#ffe08a"/><rect x="117" y="1181" width="11" height="7" fill="#3fa0e0"/><rect x="120" y="1184" width="5" height="4" fill="#ffe08a"/><text x="161" y="1192" font-size="29" font-weight="bold" fill="#2aa5e8" font-family="Liberation Sans,sans-serif">e</text><path d="M160 1188c-3-6 12-20 22-17" fill="none" stroke="#f0c020" stroke-width="2"/><rect x="209" y="1168" width="24" height="24" fill="#fff"/><circle cx="221" cy="1180" r="8" fill="#e01010"/><path d="M221 1168v24M209 1180h24" stroke="#e01010" stroke-width="1.500"/><path d="M221 1173v14M214 1180h14" stroke="#fff" stroke-width="1.600"/><rect x="258" y="1171" width="13" height="15" rx="1.500" fill="#c9c9c9"/><rect x="259" y="1172" width="6" height="13" fill="#e6e6e6"/><ellipse cx="274" cy="1179" rx="8" ry="7.500" fill="#2c2c2c"/><ellipse cx="276" cy="1179.500" rx="5" ry="5.500" fill="#0c0c0c"/><ellipse cx="278" cy="1180" rx="2.200" ry="3" fill="#5a5a5a"/></svg><svg class="abs" style="left:1730px;top:1160px" width="190" height="40" viewBox="1730 1160 190 40" fill="none" stroke="#fff" font-family="Liberation Sans,sans-serif"><path d="M1737 1183l5.500-5.500 5.500 5.500" stroke-width="1.300"/><rect x="1761.500" y="1174.500" width="10" height="8" stroke-width="1.100"/><path d="M1759 1174v12M1762 1186h9" stroke-width="1.100"/><path d="M1770 1180l4 7h-8z" fill="#f0b020" stroke="none"/><path d="M1784 1178h3l4-4v12l-4-4h-3z" stroke-width="1.100"/><path d="M1794 1177l5 5M1799 1177l-5 5" stroke-width="1.100"/><g stroke="none" fill="#fff" font-size="12" text-anchor="middle" letter-spacing="-0.3"><text x="1835.500" y="1175">11:23 AM</text><text x="1835.500" y="1193.500">10/25/2018</text></g><path d="M1879 1171.500h16v11.500h-9.500l-3.500 3.500v-3.500h-3z" fill="#fff" stroke="none"/><path d="M1882 1174.500h10M1882 1177.500h10M1882 1180.500h6" stroke="#2b2b2b" stroke-width="1"/><circle cx="1894.800" cy="1187.500" r="7.300" fill="#2c2220" stroke="#d8d8d8" stroke-width="1.200"/><text x="1894.800" y="1192" font-size="12.500" font-weight="bold" text-anchor="middle" fill="#fff" stroke="none">1</text><path d="M1915.500 1160v40" stroke="#6a6a60" stroke-width="1"/></svg>
</div>
</body></html>
